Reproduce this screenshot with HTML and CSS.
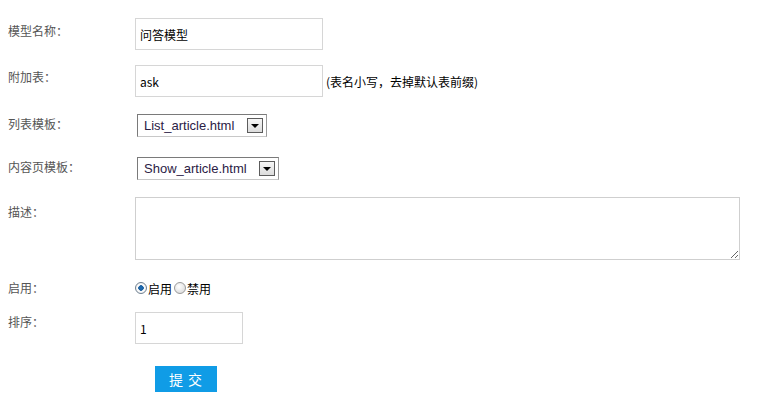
FILE: index.html
```html
<!DOCTYPE html>
<html>
<head>
<meta charset="utf-8">
<link rel="stylesheet" href="styles.css">
</head>
<body>
<form class="form">
  <div class="row r1">
    <div class="label l5">模型名称：</div>
    <div class="field"><input class="text" type="text" value="问答模型"></div>
  </div>
  <div class="row r2">
    <div class="label l4">附加表：</div>
    <div class="field"><input class="text" type="text" value="ask"><span class="hint">(表名小写，去掉默认表前缀)</span></div>
  </div>
  <div class="row r3">
    <div class="label l2">列表模板：</div>
    <div class="field"><div class="select s1"><span class="sel-text">List_article.html</span><span class="sel-btn"><i class="tri"></i></span></div></div>
  </div>
  <div class="row r4">
    <div class="label l2">内容页模板：</div>
    <div class="field"><div class="select s2"><span class="sel-text">Show_article.html</span><span class="sel-btn"><i class="tri"></i></span></div></div>
  </div>
  <div class="row r5">
    <div class="label l7">描述：</div>
    <div class="field"><textarea class="area"></textarea></div>
  </div>
  <div class="row r6">
    <div class="label">启用：</div>
    <div class="field radios">
      <span class="radio on"></span><span class="rtext">启用</span>
      <span class="radio"></span><span class="rtext">禁用</span>
    </div>
  </div>
  <div class="row r7">
    <div class="label l2">排序：</div>
    <div class="field"><input class="text short" type="text" value="1"></div>
  </div>
  <div class="row r8">
    <div class="label"></div>
    <div class="field"><button class="submit" type="button">提 交</button></div>
  </div>
</form>
</body>
</html>
```

FILE: styles.css
```css
html, body {
  margin: 0;
  padding: 0;
  background: #fff;
}
body {
  font-family: "Noto Sans CJK SC", "Liberation Sans", sans-serif;
  font-size: 12px;
}
.form {
  padding: 18px 0 0 8px;
}
.row {
  display: flex;
  align-items: flex-start;
}
.label {
  width: 127px;
  flex: none;
  color: #555;
  font-size: 12px;
  line-height: 16px;
}
.l2 { padding-top: 2px; }
.l4 { padding-top: 4px; }
.l5 { padding-top: 5px; }
.l7 { padding-top: 7px; }
.field {
  display: flex;
  align-items: center;
}
.r2 { margin-top: 15px; }
.r3 { margin-top: 17px; }
.r4 { margin-top: 20px; }
.r5 { margin-top: 17px; }
.r6 { margin-top: 20px; align-items: center; }
.r7 { margin-top: 16px; }
.r8 { margin-top: 22px; }
.text {
  box-sizing: border-box;
  width: 188px;
  height: 32px;
  border: 1px solid #d6d6d6;
  padding: 0 4px;
  margin: 0;
  font-family: "Noto Sans CJK SC", "Liberation Sans", sans-serif;
  font-size: 12px;
  color: #000;
  outline: none;
}
.short { width: 108px; }
.hint {
  margin-left: 3px;
  color: #000;
  font-size: 12px;
}
.select {
  box-sizing: border-box;
  margin-left: 2px;
  height: 23px;
  border: 1px solid #7a7a7a;
  border-right-color: #9a9a9a;
  border-bottom-color: #c8c8c8;
  background: #fff;
  display: flex;
  align-items: center;
  justify-content: space-between;
  padding: 0 3px 0 6px;
}
.s1 { width: 130px; }
.s2 { width: 142px; }
.sel-text {
  font-family: "Liberation Sans", Arial, sans-serif;
  font-size: 13px;
  color: #2b2145;
}
.sel-btn {
  box-sizing: border-box;
  width: 16px;
  height: 15px;
  border: 1px solid #5c5c5c;
  background: linear-gradient(#f6f6f6, #dcdcdc);
  display: flex;
  align-items: center;
  justify-content: center;
}
.tri {
  width: 0;
  height: 0;
  border-left: 4px solid transparent;
  border-right: 4px solid transparent;
  border-top: 4px solid #000;
}
.area {
  box-sizing: border-box;
  width: 605px;
  height: 63px;
  border: 1px solid #cfcfcf;
  margin: 0;
  padding: 2px;
  outline: none;
}
.radios {
  height: 14px;
  color: #000;
}
.radio {
  box-sizing: border-box;
  width: 12px;
  height: 12px;
  border-radius: 50%;
  border: 1px solid #9a9a9a;
  background: radial-gradient(circle at 40% 35%, #fff, #d4d4d4);
  display: inline-block;
  margin-right: 1px;
}
.radio.on {
  background: radial-gradient(circle, #1e6fb8 0, #1b5e9e 2.5px, #ffffff 3px, #e4e4e4 100%);
  border-color: #6e7f90;
}
.rtext {
  font-size: 12px;
  margin-right: 2px;
}
.submit {
  margin-left: 20px;
  width: 62px;
  height: 26px;
  border: none;
  background: #109ce6;
  color: #fff;
  font-family: "Noto Sans CJK SC", sans-serif;
  font-size: 14px;
  padding: 0;
  letter-spacing: 1px;
}
```
